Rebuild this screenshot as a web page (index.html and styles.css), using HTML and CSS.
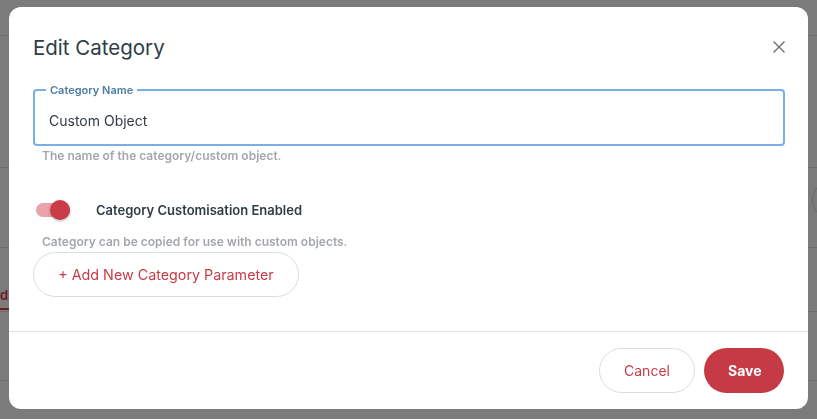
FILE: index.html
```html
<!DOCTYPE html>
<html>
<head>
    <meta charset="UTF-8">
    <title>Edit Category</title>

    <link rel="stylesheet" href="styles.css">
</head>
<body>
    <div class="page">
        <div class="row r1"></div>
        <div class="row r2"></div>
        <div class="row r3"><span class="avatar"></span></div>
        <div class="row r4"><span class="tab">d:</span></div>
        <div class="row r5"></div>
    </div>

    <div class="modal">
        <div class="head">
            <h2>Edit Category</h2>
            <button class="close" aria-label="Close">
                <svg width="12" height="12" viewBox="0 0 12 12">
                    <path d="M 0.5,0.5 L 11.5,11.5 M 11.5,0.5 L 0.5,11.5" stroke="#6b6f73" stroke-width="1.4" fill="none"></path>
                </svg>
            </button>
        </div>

        <div class="body">
            <fieldset class="field">
                <legend>Category Name</legend>
                <div class="value">Custom Object</div>
            </fieldset>
            <p class="hint">The name of the category/custom object.</p>

            <div class="switch-row">
                <span class="switch"><span class="track"></span><span class="thumb"></span></span>
                <span class="switch-label">Category Customisation Enabled</span>
            </div>
            <p class="hint hint-sw">Category can be copied for use with custom objects.</p>

            <button class="btn outline add">+ Add New Category Parameter</button>
        </div>

        <div class="foot">
            <button class="btn outline">Cancel</button>
            <button class="btn primary">Save</button>
        </div>
    </div>
</body>
</html>
```

FILE: styles.css
```css
body {
    margin: 0;
    background-color: #7b7b7b;
    font-family: Inter, "Noto Sans", sans-serif;
}

/* page behind the dialog */
.page {
    height: 419px;
    overflow: hidden;
}

.row {
    border-bottom: 1px solid #6e6e6e;
    box-sizing: border-box;
}

.r1 { height: 36px; }
.r2 { height: 132px; }
.r3 { height: 80px; text-align: right; }
.r4 { height: 64px; }
.r5 { height: 69px; }

.avatar {
    display: inline-block;
    width: 36px;
    height: 36px;
    margin: 13px -33px 0 0;
    border: 1px solid #6a6a6a;
    border-radius: 50%;
}

.tab {
    display: inline-block;
    width: 9px;
    margin-top: 39px;
    padding-bottom: 5px;
    border-bottom: 2px solid #6b1c24;
    color: #6b1c24;
    font-size: 13px;
    font-weight: 600;
    line-height: 16px;
}

/* dialog */
.modal {
    position: fixed;
    left: 9px;
    top: 7px;
    width: 799px;
    height: 402px;

    background-color: #fff;
    border-radius: 12px;

    display: flex;
    flex-direction: column;
}

.head {
    display: flex;
    align-items: center;
    justify-content: space-between;
    padding: 26px 23px 0 24px;
}

.head h2 {
    margin: 1px 0 -1px;
    color: #2e3c47;
    font-size: 20.5px;
    font-weight: 400;
    line-height: 28px;
}

.close {
    border: none;
    background: none;
    padding: 0;
    width: 12px;
    height: 12px;
    display: flex;
}

.body {
    flex: 1;
    padding: 23px 23px 0 24px;
}

.field {
    margin: 0;
    padding: 0 15px 0 14px;
    height: 62px;
    box-sizing: border-box;

    border: 2px solid #7aafe5;
    border-radius: 4px;
}

.field legend {
    padding: 0 4px;
    margin-left: -3px;
    color: #4f7ca6;
    font-size: 11px;
    font-weight: 600;
    line-height: 12px;
}

.value {
    margin-top: 15px;
    color: #2e3c47;
    font-size: 14px;
    line-height: 20px;
}

.hint {
    margin: 2px 0 0 9px;
    color: #a3a7ab;
    font-size: 12px;
    font-weight: 600;
    line-height: 16px;
}

.hint-sw {
    margin-top: 11px;
}

.switch-row {
    display: flex;
    align-items: center;
    margin-top: 33px;
    height: 26px;
}

.switch {
    width: 34px;
    height: 20px;
    margin-left: 3px;
    display: flex;
    align-items: center;
}

.track {
    width: 34px;
    height: 14px;
    border-radius: 7px;
    background-color: #e9a4ab;
}

.thumb {
    width: 20px;
    height: 20px;
    margin-left: -20px;
    flex-shrink: 0;
    border-radius: 50%;
    background-color: #c93c48;
    box-shadow: 0 1px 3px rgba(0, 0, 0, 0.3);
}

.switch-label {
    margin-left: 26px;
    color: #2e3c47;
    font-size: 13px;
    font-weight: 600;
}

.btn {
    height: 46px;
    padding: 0 24px;
    border-radius: 23px;
    font-family: Inter, "Noto Sans", sans-serif;
    font-size: 14px;
    cursor: pointer;
}

.outline {
    border: 1px solid #dcdcdc;
    background-color: #fff;
    color: #c83c49;
}

.add {
    margin-top: 2px;
    height: 45px;
    width: 266px;
    font-size: 14.3px;
}

.foot {
    display: flex;
    justify-content: flex-end;
    gap: 9px;
    padding: 16px 24px 16px;
    border-top: 1px solid #e0e0e0;
}

.foot .btn {
    height: 45px;
}

.foot .outline {
    width: 96px;
}

.primary {
    width: 80px;
    border: none;
    background-color: #c63a46;
    color: #fff;
    font-weight: 700;
}
```
